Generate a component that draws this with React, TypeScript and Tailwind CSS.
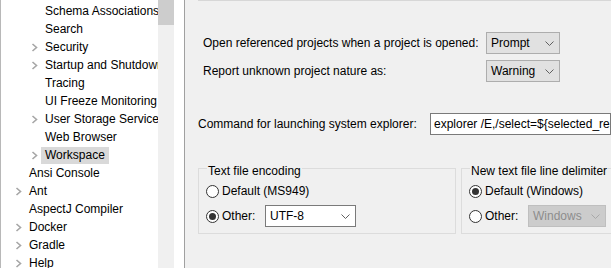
import type { ReactNode } from "react";

type Node = { label: string; level: 1 | 2; expandable?: boolean; selected?: boolean };

const tree: Node[] = [
  { label: "Schema Associations", level: 2 },
  { label: "Search", level: 2 },
  { label: "Security", level: 2, expandable: true },
  { label: "Startup and Shutdown", level: 2, expandable: true },
  { label: "Tracing", level: 2 },
  { label: "UI Freeze Monitoring", level: 2 },
  { label: "User Storage Service", level: 2, expandable: true },
  { label: "Web Browser", level: 2 },
  { label: "Workspace", level: 2, expandable: true, selected: true },
  { label: "Ansi Console", level: 1 },
  { label: "Ant", level: 1, expandable: true },
  { label: "AspectJ Compiler", level: 1 },
  { label: "Docker", level: 1, expandable: true },
  { label: "Gradle", level: 1, expandable: true },
  { label: "Help", level: 1, expandable: true },
];

function Chevron() {
  return (
    <svg width="7" height="9" viewBox="0 0 7 9" className="block">
      <polyline points="1.5,1 5.5,4.5 1.5,8" fill="none" stroke="#a6a6a6" strokeWidth="1.6" />
    </svg>
  );
}

function DownArrow({ color = "#606060" }: { color?: string }) {
  return (
    <svg width="9" height="5" viewBox="0 0 9 5" className="block">
      <polyline points="0.5,0.5 4.5,4.5 8.5,0.5" fill="none" stroke={color} strokeWidth="1" />
    </svg>
  );
}

function Combo({
  value,
  width,
  tone,
}: {
  value: string;
  width: string;
  tone: "button" | "white" | "disabled";
}) {
  const box =
    tone === "button"
      ? "bg-[#e1e1e1] border-[#adadad] text-black"
      : tone === "white"
        ? "bg-white border-[#7a7a7a] text-black"
        : "bg-[#cccccc] border-[#bfbfbf] text-[#8c8c8c]";
  return (
    <div className={`flex h-[22px] shrink-0 ${width} items-center justify-between border pl-[4px] pr-[5px] ${box}`}>
      <span>{value}</span>
      <DownArrow color={tone === "disabled" ? "#a8a8a8" : "#606060"} />
    </div>
  );
}

function Radio({ checked, children }: { checked?: boolean; children: ReactNode }) {
  return (
    <div className="flex items-center gap-[3px]">
      <span className="flex h-[13px] w-[13px] shrink-0 items-center justify-center rounded-full border border-[#333333] bg-white">
        {checked && <span className="h-[7px] w-[7px] rounded-full bg-[#333333]" />}
      </span>
      <span>{children}</span>
    </div>
  );
}

function Group({ title, width, children }: { title: string; width: string; children: ReactNode }) {
  return (
    <div className={`relative shrink-0 border border-[#dcdcdc] pb-[6px] pl-[7px] pt-[15px] ${width}`}>
      <span className="absolute -top-[5px] left-[8px] bg-[#f0f0f0] px-[1px] leading-[14px]">{title}</span>
      {children}
    </div>
  );
}

export default function App() {
  return (
    <div
      className="flex h-[268px] w-[611px] overflow-hidden bg-[#f0f0f0] text-[12px] text-black"
      style={{ fontFamily: '"Liberation Sans", Arial, sans-serif' }}
    >
      {/* preference tree */}
      <div className="flex h-full shrink-0 bg-white">
        <div className="h-full w-[158px] overflow-hidden border-l border-[#b8b8b8] pt-[2px]">
          {tree.map((n) => (
            <div
              key={n.label}
              className={`flex h-[18px] items-center whitespace-nowrap ${n.level === 2 ? "pl-[30px]" : "pl-[14px]"}`}
            >
              <span className="flex w-[10px] shrink-0 items-center">{n.expandable && <Chevron />}</span>
              <span className={`flex h-[17px] shrink-0 items-center px-[4px] ${n.selected ? "bg-[#d9d9d9]" : ""}`}>
                {n.label}
              </span>
            </div>
          ))}
        </div>
        <div className="h-full w-[16px] bg-[#f0f0f0]">
          <div className="h-[25px] bg-[#cdcdcd]" />
        </div>
        <div className="w-[10px]" />
      </div>
      <div className="h-full w-px shrink-0 bg-[#a0a0a0]" />

      {/* workspace page */}
      <div className="flex min-w-0 flex-1 flex-col whitespace-nowrap">
        <div className="ml-[13px] h-px bg-[#d7d7d7]" />

        <div className="ml-[18px] mt-[31px] grid grid-cols-[283px_74px] items-center gap-y-[6px]">
          <span>Open referenced projects when a project is opened:</span>
          <Combo value="Prompt" width="w-[74px]" tone="button" />
          <span>Report unknown project nature as:</span>
          <Combo value="Warning" width="w-[74px]" tone="button" />
        </div>

        <div className="ml-[13px] mt-[31px] flex items-center">
          <span className="w-[232px] shrink-0">Command for launching system explorer:</span>
          <div className="flex h-[22px] flex-1 items-center overflow-hidden border border-[#7a7a7a] bg-white pl-[3px]">
            explorer /E,/select=${"{"}selected_resource_loc{"}"}
          </div>
        </div>

        <div className="ml-[13px] mt-[33px] flex gap-[5px]">
          <Group title="Text file encoding" width="w-[258px]">
            <div className="flex h-[14px] items-center">
              <Radio>Default (MS949)</Radio>
            </div>
            <div className="mt-[7px] flex h-[22px] items-center">
              <div className="w-[59px] shrink-0">
                <Radio checked>Other:</Radio>
              </div>
              <Combo value="UTF-8" width="w-[91px]" tone="white" />
            </div>
          </Group>
          <Group title="New text file line delimiter" width="w-[200px]">
            <div className="flex h-[14px] items-center">
              <Radio checked>Default (Windows)</Radio>
            </div>
            <div className="mt-[7px] flex h-[22px] items-center">
              <div className="w-[59px] shrink-0">
                <Radio>Other:</Radio>
              </div>
              <Combo value="Windows" width="w-[78px]" tone="disabled" />
            </div>
          </Group>
        </div>
      </div>
    </div>
  );
}
